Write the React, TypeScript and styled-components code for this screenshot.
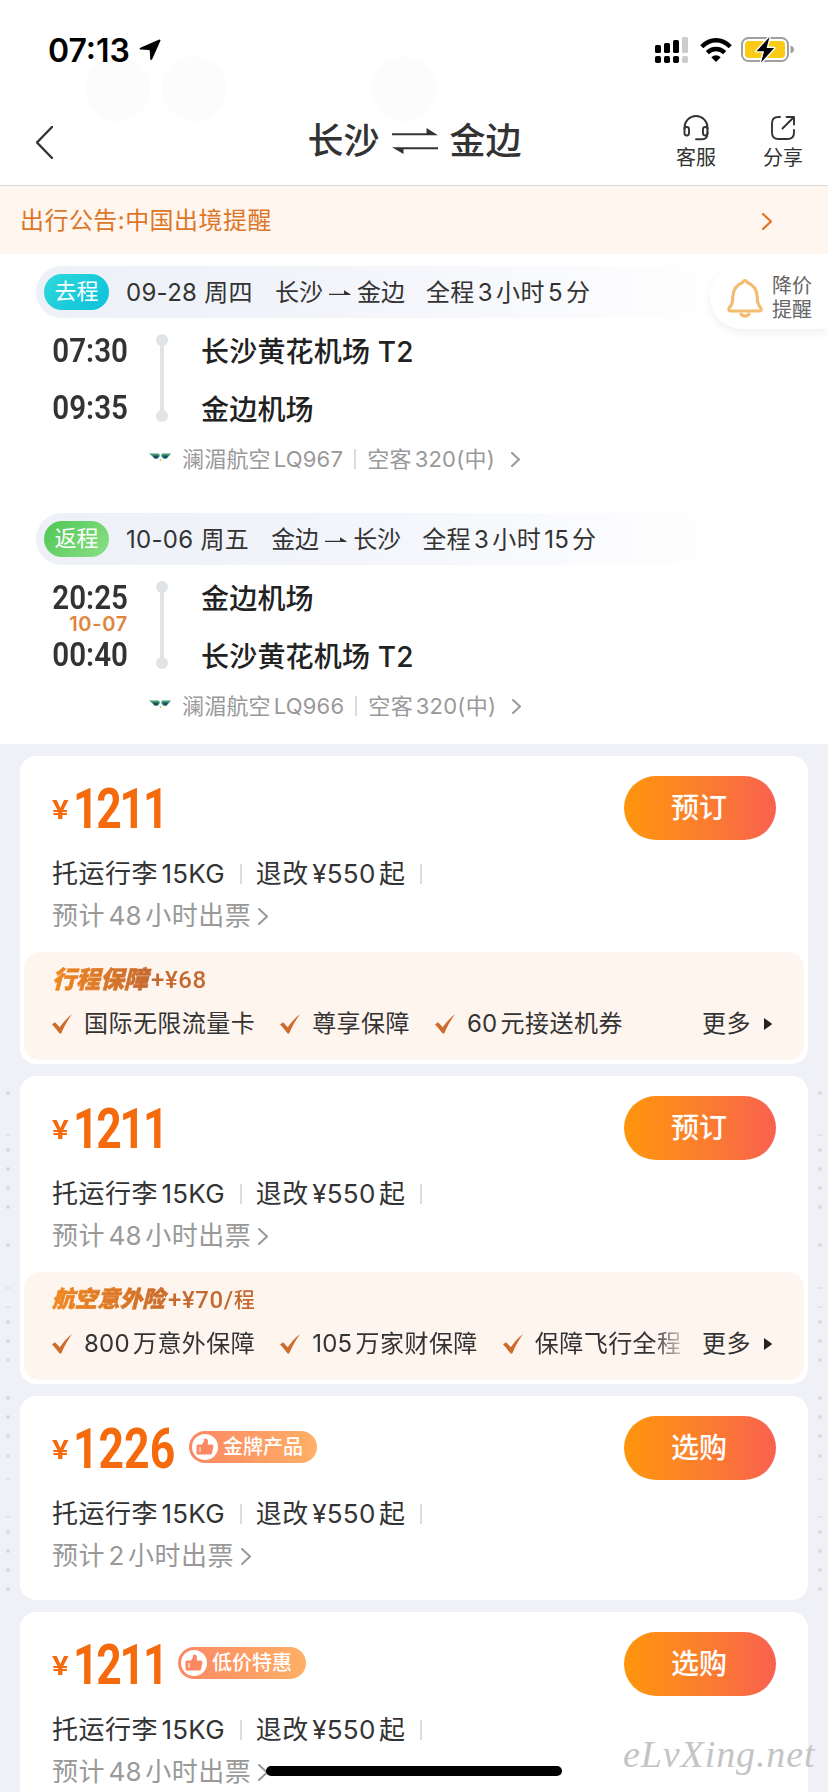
import React from "react";
import styled, { createGlobalStyle } from "styled-components";

const GlobalStyle = createGlobalStyle`
  *, *::before, *::after { box-sizing: border-box; }
  html, body { margin: 0; padding: 0; background: #eff1f6; }
  body {
    width: 828px;
    height: 1792px;
    overflow: hidden;
    color: #333;
    font-family: Inter, "Noto Sans CJK SC", sans-serif;
    white-space: nowrap;
  }
`;

const Screen = styled.div`
  position: relative;
  width: 828px;
  height: 1792px;
  overflow: hidden;
`;

/* ---------- text with spaced digits ---------- */
const Num = styled.span<{ $first: boolean; $last: boolean }>`
  margin-left: ${(p) => (p.$first ? 0 : "0.13em")};
  margin-right: ${(p) => (p.$last ? 0 : "0.13em")};
  letter-spacing: 0.01em;
`;

function Mixed({ text }: { text: string }) {
  const parts = text.split(/([0-9A-Z¥]+)/).filter(Boolean);
  return (
    <>
      {parts.map((p, i) =>
        /^[0-9A-Z¥]/.test(p) ? (
          <Num key={i} $first={i === 0} $last={i === parts.length - 1 || parts[i + 1].startsWith("(")}>
            {p}
          </Num>
        ) : (
          <React.Fragment key={i}>{p}</React.Fragment>
        )
      )}
    </>
  );
}

/* ---------- status bar ---------- */
const StatusBar = styled.header`
  height: 98px;
  background: #fff;
  display: flex;
  justify-content: space-between;
  align-items: flex-start;
  padding: 34px 34px 0 48px;
`;
const Clock = styled.div`
  display: flex;
  align-items: center;
  gap: 9px;
  height: 32px;
  font-size: 32px;
  font-weight: 600;
  color: #000;
`;
const StatusIcons = styled.div`
  display: flex;
  align-items: center;
  gap: 12px;
  height: 32px;
  > svg:last-child { margin-left: -3px; }
`;
const HeaderCircles = styled.svg`
  position: absolute;
  top: 50px;
  left: 0;
`;

/* ---------- nav bar ---------- */
const NavBar = styled.nav`
  height: 88px;
  background: #fff;
  border-bottom: 1px solid #d9dad8;
  display: grid;
  grid-template-columns: 200px 1fr 200px;
  align-items: center;
  padding: 2px 25px 0 36px;
`;
const Title = styled.h1`
  margin: 0;
  display: flex;
  justify-content: center;
  align-items: center;
  gap: 12px;
  font-size: 36px;
  line-height: 44px;
  font-weight: 500;
  padding: 0 10px 3px 0;
`;
const NavActions = styled.div`
  display: flex;
  justify-content: flex-end;
  gap: 47px;
`;
const NavAction = styled.button`
  border: 0;
  padding: 0;
  background: none;
  display: flex;
  flex-direction: column;
  align-items: center;
  gap: 4px;
  color: #333;
  font: 400 20px/26px Inter, "Noto Sans CJK SC", sans-serif;
`;

/* ---------- notice ---------- */
const Notice = styled.div`
  height: 68px;
  background: #fff6f0;
  color: #dd7628;
  display: flex;
  align-items: center;
  justify-content: space-between;
  padding: 2px 56px 0 20px;
  font-size: 24px;
  line-height: 36px;
  letter-spacing: 0.45px;
`;

/* ---------- itinerary ---------- */
const Itinerary = styled.section`
  height: 490px;
  background: #fff;
  padding: 12px 0 0 36px;
  position: relative;
`;
const Segment = styled.article`
  height: 247px;
`;
const SegmentHead = styled.div`
  height: 52px;
  width: 700px;
  border-radius: 26px 0 0 26px;
  background: linear-gradient(90deg, #eef0f8 0%, #f3f5fb 45%, #fff 100%);
  display: flex;
  align-items: center;
  padding-left: 8px;
  font-size: 24px;
  line-height: 34px;
`;
const DirectionTag = styled.span<{ $from: string; $to: string }>`
  width: 65px;
  height: 36px;
  border-radius: 18px;
  background: linear-gradient(135deg, ${(p) => p.$from}, ${(p) => p.$to});
  color: #fff;
  font-size: 22px;
  line-height: 34px;
  text-align: center;
  margin-right: 17px;
`;
const FlightDate = styled.span`
  margin: 2px 22px 0 0;
  letter-spacing: 0.3px;
`;
const Route = styled.span`
  display: inline-flex;
  align-items: center;
  gap: 6px;
  margin: 2px 21px 0 0;
`;
const Duration = styled.span`
  margin-top: 2px;
  letter-spacing: 0.4px;
`;
const SegmentBody = styled.div`
  display: grid;
  grid-template-columns: 92px 68px 1fr;
  height: 117px;
  padding-top: 4px;
`;
const Times = styled.div`
  display: grid;
  grid-template-rows: 30px 27px 30px;
  justify-items: end;
  align-content: start;
  padding-top: 13px;
`;
const Time = styled.span`
  font: 600 34px/30px Roboto, sans-serif;
  transform: scaleX(0.87);
  transform-origin: right center;
`;
const NextDay = styled.span`
  font-size: 20px;
  line-height: 24px;
  font-weight: 600;
  letter-spacing: 0.7px;
  color: #e0843c;
`;
const Track = styled.div`
  width: 12px;
  height: 88px;
  margin: 12px 0 0 28px;
  display: flex;
  flex-direction: column;
  align-items: center;
  justify-content: space-between;
  background: linear-gradient(#e1e4e6, #e1e4e6) center / 4px 80px no-repeat;
  &::before, &::after {
    content: "";
    width: 12px;
    height: 12px;
    border-radius: 50%;
    background: #e1e4e6;
  }
`;
const Airports = styled.div`
  padding: 1px 0 0 5px;
  font-size: 28px;
  line-height: 58px;
  font-weight: 500;
  letter-spacing: 0.2px;
  color: #222;
`;
const Airline = styled.div`
  height: 40px;
  margin-top: 4px;
  padding-left: 112px;
  display: flex;
  align-items: center;
  font-size: 22px;
  line-height: 40px;
  color: #999;
`;
const AirlineLogo = styled.svg`
  margin: -5px 10px 0 0;
`;
const FlightNo = styled.span`
  letter-spacing: 0.2px;
`;
const Plane = styled.span`
  letter-spacing: 0.3px;
  margin-right: 16px;
`;
const Divider = styled.i<{ $m: string }>`
  width: 2px;
  height: 20px;
  background: #dcdcdc;
  margin: ${(p) => p.$m};
`;
const PriceAlert = styled.button`
  position: absolute;
  top: 11px;
  right: 0;
  width: 118px;
  height: 64px;
  border: 0;
  padding: 2px 16px 0 17px;
  border-radius: 32px 0 0 32px;
  background: #fff;
  box-shadow: 0 4px 8px rgba(0, 0, 0, 0.06);
  display: flex;
  align-items: center;
  justify-content: space-between;
  color: #666;
  font: 400 20px/24px Inter, "Noto Sans CJK SC", sans-serif;
  text-align: left;
`;

/* ---------- fares ---------- */
const FareList = styled.main`
  padding: 12px 20px 0;
  display: flex;
  flex-direction: column;
  gap: 12px;
`;
const Card = styled.article`
  min-height: 204px;
  flex: none;
  background: #fff;
  border-radius: 16px;
  padding: 0 4px 4px;
`;
const FareTop = styled.div`
  height: 196px;
  padding: 0 28px;
`;
const PriceRow = styled.div`
  display: flex;
  align-items: center;
  height: 97px;
  padding-top: 7px;
`;
const Yen = styled.span`
  width: 21px;
  font: 600 26px/30px Roboto, sans-serif;
  color: #f56a0c;
  margin-top: 4px;
  transform: scaleX(1.2);
  transform-origin: left center;
`;
const Price = styled.span<{ $w: number; $ls: number }>`
  width: ${(p) => p.$w}px;
  padding-top: 2px;
  span {
    display: inline-block;
    font: 700 55px/64px Roboto, sans-serif;
    letter-spacing: ${(p) => p.$ls}px;
    color: #f56a0c;
    transform: scaleX(0.81);
    transform-origin: left center;
  }
`;
const BuyButton = styled.button`
  margin-left: auto;
  width: 152px;
  height: 64px;
  border: 0;
  border-radius: 32px;
  padding: 0 2px 0 0;
  background: linear-gradient(90deg, #ff950c 0%, #fc7f2c 50%, #f9604f 100%);
  color: #fff;
  font: 500 28px/62px Inter, "Noto Sans CJK SC", sans-serif;
`;
const Badge = styled.span`
  display: inline-flex;
  align-items: center;
  width: 128px;
  height: 32px;
  margin: -2px 0 0 14px;
  padding: 0 3px;
  border-radius: 16px;
  background: linear-gradient(90deg, #fb8763, #ffb066);
  color: #fff;
  font-size: 20px;
  line-height: 30px;
  font-weight: 500;
  gap: 5px;
`;
const FareLine = styled.div<{ $muted?: boolean }>`
  display: flex;
  align-items: center;
  height: 42px;
  font-size: 26px;
  line-height: 42px;
  letter-spacing: 0.5px;
  color: ${(p) => (p.$muted ? "#999" : "#333")};
  > svg { margin-left: 7px; }
`;
const Perks = styled.section`
  height: 108px;
  border-radius: 16px;
  background: #fff5ef;
  padding: 10px 28px 0;
`;
const PerksTitle = styled.div`
  display: flex;
  width: max-content;
  align-items: center;
  height: 36px;
  background: linear-gradient(90deg, #f2871f, #c4682f 65%);
  background-clip: text;
  -webkit-background-clip: text;
  color: transparent;
  font: 500 24px/36px Roboto, "Noto Sans CJK SC", sans-serif;
  letter-spacing: 0.6px;
`;
const PerksName = styled.em<{ $size: number }>`
  font-size: ${(p) => p.$size}px;
  font-weight: 900;
  font-style: italic;
  letter-spacing: 0;
  padding-right: 3px;
  -webkit-text-stroke: 0.6px transparent;
`;
const PerksUnit = styled.span`
  font-size: 21px;
`;
const PerksRow = styled.div`
  display: flex;
  align-items: center;
  height: 36px;
  margin-top: 8px;
  font-size: 24px;
  line-height: 36px;
  letter-spacing: 0.45px;
`;
const PerksScroll = styled.div<{ $fade: boolean }>`
  width: 634px;
  display: flex;
  gap: 25px;
  overflow: hidden;
  -webkit-mask-image: ${(p) => (p.$fade ? "linear-gradient(90deg, #000 600px, transparent 640px)" : "none")};
`;
const Perk = styled.span`
  display: inline-flex;
  align-items: center;
  flex: none;
  gap: 12px;
`;
const More = styled.span`
  margin-left: auto;
  display: inline-flex;
  align-items: center;
  gap: 13px;
  margin-right: 4px;
`;

/* ---------- overlays ---------- */
const EdgeMarks = styled.svg<{ $x: number }>`
  position: absolute;
  top: 0;
  left: ${(p) => p.$x}px;
`;
const HomeIndicator = styled.div`
  position: absolute;
  left: 266px;
  top: 1766px;
  width: 296px;
  height: 10px;
  border-radius: 5px;
  background: #000;
`;
const SiteMark = styled.div`
  position: absolute;
  left: 623px;
  top: 1732px;
  font: italic 400 38px/44px "Liberation Serif", serif;
  letter-spacing: 0.9px;
  color: #c4c4c4;
`;

/* ---------- icons ---------- */
const Chevron = ({ w, h, sw = 2, left = false }: { w: number; h: number; sw?: number; left?: boolean }) => (
  <svg width={w + 2} height={h + 2} viewBox={`-1 -1 ${w + 2} ${h + 2}`} fill="none" stroke="currentColor" strokeWidth={sw} strokeLinecap="round" strokeLinejoin="round">
    <path d={left ? `M${w} 0L0 ${h / 2}L${w} ${h}` : `M0 0L${w} ${h / 2}L0 ${h}`} />
  </svg>
);

const CheckIcon = () => (
  <svg width="20" height="20" viewBox="0 0 20 20">
    <path d="M0 10.500L3 8.200L7.800 13.200C11 8.500 15 4 20 0C16 6 12.200 12 9.200 19.500H7.600C5.200 16.500 3 13.500 0 10.500Z" fill="#cd6c2e" />
  </svg>
);

const ThumbIcon = () => (
  <svg width="26" height="26" viewBox="0 0 26 26">
    <circle cx="13" cy="13" r="13" fill="#fff" />
    <path d="M4.500 12q0-1.500 1.500-1.500h4L11.800 7.500 12.400 4.500q3.400-.4 3.600 2.800l-.3 3.200h4q1.900.1 1.700 2l-1.300 6.500q-.4 1.600-2 1.600H6q-1.500 0-1.500-1.500z" fill="#fb8763" />
    <path d="M8 13v5" stroke="#fff" strokeWidth="1" />
  </svg>
);

const SignalIcon = () => (
  <svg width="33" height="26" viewBox="0 0 33 26">
    {[8, 10, 13, 16].map((h, i) => (
      <g key={i} fill={i === 3 ? "#ccc" : "#000"}>
        <rect x={i * 9} y={16 - h} width="6" height={h} rx="1.6" />
        <rect x={i * 9} y="19" width="6" height="7" rx="1.8" />
      </g>
    ))}
  </svg>
);

const WifiIcon = () => (
  <svg width="32" height="24" viewBox="0 0 32 24" fill="none" stroke="#000" strokeWidth="4.400">
    <path d="M1.800 8.800Q8 2.300 16 2.300T30.200 8.800" />
    <path d="M7.300 14.600Q11 11 16 11T24.700 14.600" />
    <path d="M16 24L11.300 19.200Q16 15.200 20.700 19.200Z" fill="#000" stroke="none" />
  </svg>
);

const BatteryIcon = () => (
  <svg width="53" height="28" viewBox="0 0 53 28">
    <rect x="1" y="2" width="46" height="23" rx="6.500" fill="#fff" stroke="#a0a0a0" strokeWidth="2" />
    <rect x="4" y="5" width="40" height="17" rx="4" fill="#facb12" />
    <path d="M49.500 9.500q3.500 1.200 3.500 4t-3.500 4z" fill="#a0a0a0" />
    <path d="M28.500 1L15.500 15.200h7.600L20 26.500 33.200 12h-7.600z" fill="#000" stroke="#fff" strokeWidth="2.800" paintOrder="stroke" strokeLinejoin="round" />
  </svg>
);

const SwapIcon = () => (
  <svg width="46" height="26" viewBox="0 0 46 26" fill="#333">
    <path d="M0 5.300h34.500V0L46 7.300H0z" />
    <path d="M46 21.300H11.500V26L0 19.300H46z" />
  </svg>
);

const RouteArrow = () => (
  <svg width="22" height="10" viewBox="0 0 22 10" fill="#333">
    <path d="M0 5.800h15V2.200L21.500 6.200V7.100H0z" />
  </svg>
);

const HeadsetIcon = () => (
  <svg width="28" height="26" viewBox="0 0 28 26" fill="none" stroke="#333" strokeWidth="1.900" strokeLinecap="round">
    <path d="M2.500 14V12.500a11.500 11.500 0 0 1 23 0V14" />
    <rect x="2.500" y="12" width="4.500" height="8.500" rx="2.200" />
    <rect x="21" y="12" width="4.500" height="8.500" rx="2.200" />
    <path d="M25.400 17v2q-.2 5-5 5.300H14" />
  </svg>
);

const ShareIcon = () => (
  <svg width="26" height="26" viewBox="0 0 26 26" fill="none" stroke="#333" strokeWidth="1.900" strokeLinecap="round" strokeLinejoin="round">
    <path d="M10 2H8.500Q2 2 2 8.500v9Q2 24 8.500 24h9q6.500 0 6.500-6.500V15" />
    <path d="M12.500 13.500L23.500 2.500M16.500 2H24V9.500" />
  </svg>
);

const BellIcon = () => (
  <svg width="36" height="40" viewBox="0 0 36 40" fill="none" stroke="#f2bd70" strokeWidth="3.200" strokeLinejoin="round" strokeLinecap="round">
    <path d="M15.600 4.400q2.400-3.400 4.800 0Q29.600 8 30.200 18.500q0 8 3.400 11 1.500 3.500-1.400 3.500H3.800Q.9 33 2.400 29.500 5.800 26.500 5.800 18.500 6.400 8 15.600 4.400z" />
    <path d="M14 36.300q4 3.600 8 0" />
  </svg>
);

const MARKS: [number, "dot" | "dash"][] = [
  [1093, "dot"], [1135, "dash"], [1150, "dot"], [1169, "dot"], [1188, "dot"], [1207, "dot"],
  [1245, "dot"], [1288, "dash"], [1307, "dash"], [1322, "dot"], [1341, "dot"], [1360, "dot"],
  [1398, "dot"], [1417, "dot"], [1436, "dot"], [1456, "dot"], [1479, "dash"], [1517, "dash"],
  [1532, "dot"], [1551, "dot"], [1570, "dot"], [1589, "dot"],
];

const Marks = ({ x }: { x: number }) => (
  <EdgeMarks $x={x} width="8" height="1600" fill="#d9dadd" aria-hidden>
    {MARKS.map(([y, kind]) =>
      kind === "dot" ? <circle key={y} cx="4" cy={y} r="2" /> : <rect key={y} x="1.500" y={y - 0.5} width="5" height="1" />
    )}
  </EdgeMarks>
);

/* ---------- data ---------- */
interface Leg {
  tag: string;
  from: string;
  to: string;
  date: string;
  route: [string, string];
  duration: string;
  times: [string, string];
  nextDay?: string;
  airports: [string, string];
  flight: string;
}
const LEGS: Leg[] = [
  {
    tag: "去程", from: "#2fd9da", to: "#0cc0dc", date: "09-28 周四", route: ["长沙", "金边"], duration: "全程3小时5分",
    times: ["07:30", "09:35"], airports: ["长沙黄花机场 T2", "金边机场"], flight: "澜湄航空LQ967",
  },
  {
    tag: "返程", from: "#4fc653", to: "#8be088", date: "10-06 周五", route: ["金边", "长沙"], duration: "全程3小时15分",
    times: ["20:25", "00:40"], nextDay: "10-07", airports: ["金边机场", "长沙黄花机场 T2"], flight: "澜湄航空LQ966",
  },
];

interface Fare {
  price: string;
  width: number;
  spacing: number;
  action: string;
  ticketing: string;
  badge?: string;
  perks?: { name: string; size: number; cost: string; unit?: string; items: string[]; fade: boolean };
}
const FARES: Fare[] = [
  {
    price: "1211", width: 91, spacing: -2.8, action: "预订", ticketing: "预计48小时出票",
    perks: { name: "行程保障", size: 24, cost: "+¥68", items: ["国际无限流量卡", "尊享保障", "60元接送机券"], fade: false },
  },
  {
    price: "1211", width: 91, spacing: -2.8, action: "预订", ticketing: "预计48小时出票",
    perks: { name: "航空意外险", size: 22.6, cost: "+¥70/", unit: "程", items: ["800万意外保障", "105万家财保障", "保障飞行全程"], fade: true },
  },
  { price: "1226", width: 102, spacing: 0, action: "选购", ticketing: "预计2小时出票", badge: "金牌产品" },
  { price: "1211", width: 91, spacing: -2.8, action: "选购", ticketing: "预计48小时出票", badge: "低价特惠" },
];

const LegView = ({ leg }: { leg: Leg }) => (
  <Segment>
    <SegmentHead>
      <DirectionTag $from={leg.from} $to={leg.to}>{leg.tag}</DirectionTag>
      <FlightDate>{leg.date}</FlightDate>
      <Route>
        {leg.route[0]}
        <RouteArrow />
        {leg.route[1]}
      </Route>
      <Duration><Mixed text={leg.duration} /></Duration>
    </SegmentHead>
    <SegmentBody>
      <Times>
        <Time>{leg.times[0]}</Time>
        <NextDay>{leg.nextDay}</NextDay>
        <Time>{leg.times[1]}</Time>
      </Times>
      <Track />
      <Airports>
        <div>{leg.airports[0]}</div>
        <div>{leg.airports[1]}</div>
      </Airports>
    </SegmentBody>
    <Airline>
      <AirlineLogo width="24" height="10" viewBox="0 0 24 10">
        <path d="M1 1.500h10l1 2.500-2 2.500H6.500L4 4z" fill="#4c9a74" />
        <path d="M23 1.500H14l-1 2.500 2 2.500h3.500L21 4z" fill="#3f9a78" />
        <path d="M4.500 3.500h6l-1 3H6.500zM14.500 3.500h6l-2 3h-2.500z" fill="#164f66" />
        <circle cx="12.500" cy="8" r="1" fill="#b8cf6a" />
      </AirlineLogo>
      <FlightNo><Mixed text={leg.flight} /></FlightNo>
      <Divider $m="0 11px 0 11px" />
      <Plane><Mixed text="空客320(中)" /></Plane>
      <Chevron w={7} h={13} />
    </Airline>
  </Segment>
);

const FareCard = ({ fare }: { fare: Fare }) => (
  <Card>
    <FareTop>
      <PriceRow>
        <Yen>¥</Yen>
        <Price $w={fare.width} $ls={fare.spacing}><span>{fare.price}</span></Price>
        {fare.badge && (
          <Badge>
            <ThumbIcon />
            {fare.badge}
          </Badge>
        )}
        <BuyButton>{fare.action}</BuyButton>
      </PriceRow>
      <FareLine>
        <span><Mixed text="托运行李15KG" /></span>
        <Divider $m="0 14px 0 15px" />
        <span><Mixed text="退改¥550起" /></span>
        <Divider $m="0 0 0 15px" />
      </FareLine>
      <FareLine $muted>
        <span><Mixed text={fare.ticketing} /></span>
        <Chevron w={8} h={15} />
      </FareLine>
    </FareTop>
    {fare.perks && (
      <Perks>
        <PerksTitle>
          <PerksName $size={fare.perks.size}>{fare.perks.name}</PerksName>
          {fare.perks.cost}
          {fare.perks.unit && <PerksUnit>{fare.perks.unit}</PerksUnit>}
        </PerksTitle>
        <PerksRow>
          <PerksScroll $fade={fare.perks.fade}>
            {fare.perks.items.map((item) => (
              <Perk key={item}>
                <CheckIcon />
                <span><Mixed text={item} /></span>
              </Perk>
            ))}
          </PerksScroll>
          <More>
            更多
            <svg width="8" height="12" viewBox="0 0 8 12">
              <path d="M0 .8Q0 0 .8.4L7.600 5.400Q8 6 7.600 6.600L.8 11.600Q0 12 0 11.200z" fill="#222" />
            </svg>
          </More>
        </PerksRow>
      </Perks>
    )}
  </Card>
);

export default function App() {
  return (
    <Screen>
      <GlobalStyle />
      <StatusBar>
        <Clock>
          07:13
          <svg width="22" height="22" viewBox="0 0 22 22">
            <path d="M20.300.4Q22 .3 21.300 2L13.300 20Q12 22 11.200 20L10.800 12Q10.700 11 9.700 11L1.500 10.600Q-.3 9.900 1.300 8.800z" fill="#000" />
          </svg>
        </Clock>
        <StatusIcons>
          <SignalIcon />
          <WifiIcon />
          <BatteryIcon />
        </StatusIcons>
      </StatusBar>
      <NavBar>
        <Chevron w={15} h={31} sw={2.4} left />
        <Title>
          长沙
          <SwapIcon />
          金边
        </Title>
        <NavActions>
          <NavAction><HeadsetIcon />客服</NavAction>
          <NavAction><ShareIcon />分享</NavAction>
        </NavActions>
      </NavBar>
      <HeaderCircles width="828" height="75" fill="#000" fillOpacity="0.012" aria-hidden>
        <circle cx="118" cy="39" r="33" />
        <circle cx="194" cy="39" r="33" />
        <circle cx="404" cy="39" r="33" />
      </HeaderCircles>
      <Notice>
        出行公告:中国出境提醒
        <Chevron w={8} h={15} sw={2.3} />
      </Notice>
      <Itinerary>
        {LEGS.map((leg) => <LegView key={leg.tag} leg={leg} />)}
        <PriceAlert>
          <BellIcon />
          <span>降价<br />提醒</span>
        </PriceAlert>
      </Itinerary>
      <FareList>
        {FARES.map((fare, i) => <FareCard key={i} fare={fare} />)}
      </FareList>
      <Marks x={4} />
      <Marks x={816} />
      <HomeIndicator />
      <SiteMark>eLvXing.net</SiteMark>
    </Screen>
  );
}
